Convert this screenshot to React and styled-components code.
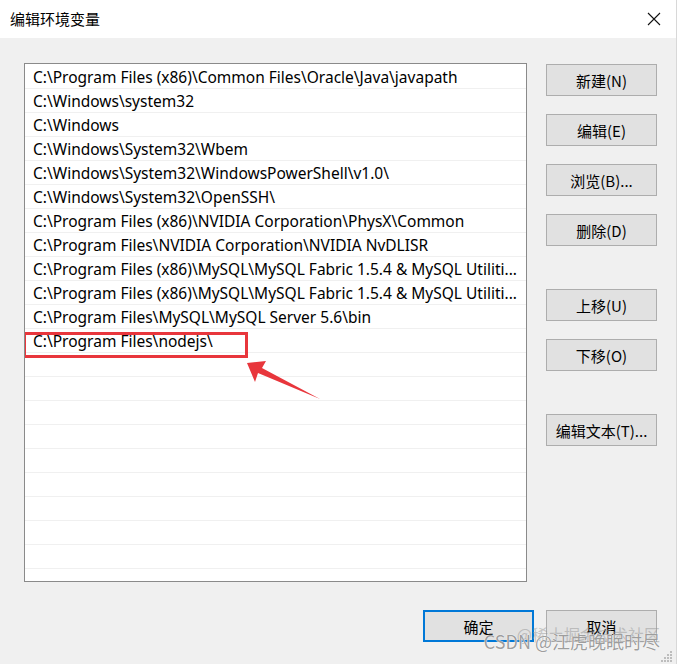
import React from 'react';
import styled, { createGlobalStyle } from 'styled-components';

const paths = [
  'C:\\Program Files (x86)\\Common Files\\Oracle\\Java\\javapath',
  'C:\\Windows\\system32',
  'C:\\Windows',
  'C:\\Windows\\System32\\Wbem',
  'C:\\Windows\\System32\\WindowsPowerShell\\v1.0\\',
  'C:\\Windows\\System32\\OpenSSH\\',
  'C:\\Program Files (x86)\\NVIDIA Corporation\\PhysX\\Common',
  'C:\\Program Files\\NVIDIA Corporation\\NVIDIA NvDLISR',
  'C:\\Program Files (x86)\\MySQL\\MySQL Fabric 1.5.4 & MySQL Utiliti...',
  'C:\\Program Files (x86)\\MySQL\\MySQL Fabric 1.5.4 & MySQL Utiliti...',
  'C:\\Program Files\\MySQL\\MySQL Server 5.6\\bin',
  'C:\\Program Files\\nodejs\\',
];

const EMPTY_ROWS = 9;

const sideButtons = [
  { label: '新建(N)', gap: 0 },
  { label: '编辑(E)', gap: 18 },
  { label: '浏览(B)...', gap: 18 },
  { label: '删除(D)', gap: 18 },
  { label: '上移(U)', gap: 43 },
  { label: '下移(O)', gap: 18 },
  { label: '编辑文本(T)...', gap: 43 },
];

export default function App() {
  return (
    <>
      <GlobalStyle />
      <Window>
        <TitleBar>
          <Title>编辑环境变量</Title>
          <CloseIcon width="14" height="14" viewBox="0 0 14 14">
            <path d="M1 1 L13 13 M13 1 L1 13" stroke="#111" strokeWidth="1.1" />
          </CloseIcon>
        </TitleBar>
        <Body>
          <Main>
            <PathList>
              {paths.map((p, i) => (
                <PathRow key={i}>{p}</PathRow>
              ))}
              {Array.from({ length: EMPTY_ROWS }).map((_, i) => (
                <PathRow key={'e' + i} />
              ))}
              <Highlight />
              <Arrow width="80" height="45" viewBox="0 0 80 45">
                <polygon
                  points="0,1 19,-1 15,6 73,37 11,11 8,20"
                  fill="#e8363c"
                  transform="translate(0,2)"
                />
              </Arrow>
            </PathList>
            <SideColumn>
              {sideButtons.map(b => (
                <DialogButton key={b.label} $gap={b.gap}>
                  {b.label}
                </DialogButton>
              ))}
            </SideColumn>
          </Main>
          <Footer>
            <DialogButton $primary>确定</DialogButton>
            <DialogButton>取消</DialogButton>
          </Footer>
        </Body>
        <Watermark>
          <WatermarkBack>@稀土掘金技术社区</WatermarkBack>
          <WatermarkFront>CSDN @江虎晚眠时尽</WatermarkFront>
        </Watermark>
        <Grip width="12" height="12" viewBox="0 0 12 12">
          {[[9, 1], [6, 4], [9, 4], [3, 7], [6, 7], [9, 7], [0, 10], [3, 10], [6, 10], [9, 10]].map(([x, y]) => (
            <rect key={x + '-' + y} x={x} y={y} width="2" height="2" fill="#bdbdbd" />
          ))}
        </Grip>
      </Window>
    </>
  );
}

const GlobalStyle = createGlobalStyle`
  html, body {
    margin: 0;
    padding: 0;
    background: #f0f0f0;
  }
  body {
    font-family: 'Noto Sans', 'Noto Sans CJK SC', sans-serif;
  }
`;

const Window = styled.div`
  position: relative;
  width: 677px;
  height: 664px;
  background: #f0f0f0;
  border-right: 1px solid #d8d8d8;
  box-sizing: border-box;
  overflow: hidden;
  display: flex;
  flex-direction: column;
`;

const TitleBar = styled.div`
  height: 38px;
  background: #fff;
  display: flex;
  align-items: center;
  justify-content: space-between;
  padding: 0 15px 0 10px;
  flex-shrink: 0;
`;

const Title = styled.span`
  font-family: 'Noto Sans CJK SC', sans-serif;
  font-size: 15px;
  color: #000;
  margin-top: -1px;
`;

const CloseIcon = styled.svg`
  display: block;
  margin-top: -1px;
`;

const Body = styled.div`
  padding: 25px 19px 0 24px;
  display: flex;
  flex-direction: column;
`;

const Main = styled.div`
  display: flex;
  gap: 19px;
  align-items: flex-start;
`;

const PathList = styled.div`
  position: relative;
  width: 504px;
  height: 519px;
  box-sizing: border-box;
  background: #fff;
  border: 1px solid #8a8a8a;
  padding-top: 1px;
  overflow: hidden;
`;

const PathRow = styled.div`
  height: 24px;
  box-sizing: border-box;
  border-bottom: 1px solid #f0f0f0;
  padding-left: 8px;
  font-family: 'Noto Sans', 'Noto Sans CJK SC', sans-serif;
  font-size: 15.5px;
  line-height: 24px;
  color: #000;
  white-space: nowrap;
`;

const Highlight = styled.div`
  position: absolute;
  left: -2px;
  top: 268px;
  width: 225px;
  height: 26px;
  border: 3px solid #e8363c;
  box-sizing: border-box;
`;

const Arrow = styled.svg`
  position: absolute;
  left: 222px;
  top: 296px;
  overflow: visible;
`;

const SideColumn = styled.div`
  display: flex;
  flex-direction: column;
  margin-top: 1px;
`;

const DialogButton = styled.button`
  width: 111px;
  height: 32px;
  margin-top: ${p => p.$gap || 0}px;
  box-sizing: border-box;
  background: #e1e1e1;
  border: ${p => (p.$primary ? '2px solid #0078d7' : '1px solid #adadad')};
  font-family: 'Noto Sans CJK SC', sans-serif;
  font-size: 15px;
  line-height: 1;
  color: #000;
  padding: 0;
  cursor: default;
`;

const Footer = styled.div`
  display: flex;
  justify-content: flex-end;
  gap: 12px;
  margin-top: 28px;
`;

const Watermark = styled.div`
  position: absolute;
  right: 16px;
  bottom: 12px;
  font-family: 'Noto Sans CJK SC', sans-serif;
  pointer-events: none;
`;

const WatermarkBack = styled.div`
  position: absolute;
  right: 0;
  top: -8px;
  font-size: 16px;
  color: rgba(150, 150, 150, 0.5);
  white-space: nowrap;
`;

const WatermarkFront = styled.div`
  position: relative;
  font-size: 18px;
  line-height: 22px;
  color: rgba(140, 140, 140, 0.85);
  white-space: nowrap;
  text-shadow: 0 0 1px #fff, 0 0 1px #fff;
`;

const Grip = styled.svg`
  position: absolute;
  right: 3px;
  bottom: 2px;
`;
